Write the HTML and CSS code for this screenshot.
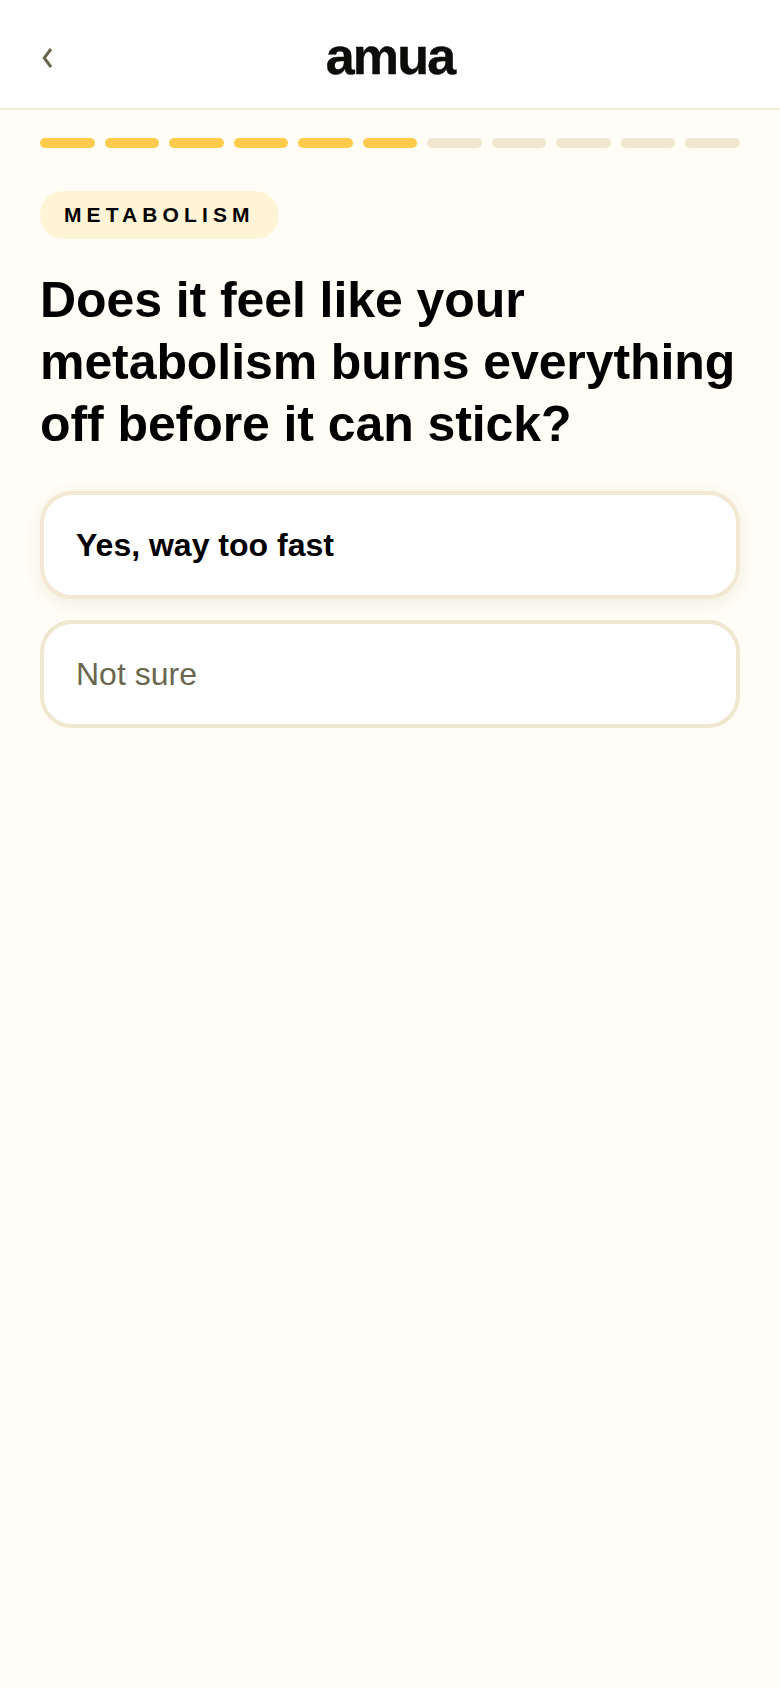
FILE: index.html
```html
<!DOCTYPE html>
<html lang="en">
<head>
    <meta charset="UTF-8">
    <meta name="viewport" content="width=device-width, initial-scale=1.0">
    <title>amua</title>
    <link rel="stylesheet" href="styles.css">
</head>
<body>
    <header class="topbar">
        <button class="back" aria-label="Back">
            <svg width="14" height="24" viewBox="0 0 14 24"><path d="M11 3 L4.2 12 L11 21" fill="none" stroke="#6b6650" stroke-width="3"/></svg>
        </button>
        <div class="logo">amua</div>
    </header>
    <main class="content">
        <div class="progress">
            <span class="seg on"></span>
            <span class="seg on"></span>
            <span class="seg on"></span>
            <span class="seg on"></span>
            <span class="seg on"></span>
            <span class="seg on"></span>
            <span class="seg"></span>
            <span class="seg"></span>
            <span class="seg"></span>
            <span class="seg"></span>
            <span class="seg"></span>
        </div>
        <span class="tag">METABOLISM</span>
        <h1>Does it feel like your metabolism burns everything off before it can stick?</h1>
        <div class="options">
            <button class="option selected">Yes, way too fast</button>
            <button class="option">Not sure</button>
        </div>
    </main>
</body>
</html>
```
FILE: styles.css
```css
body {
    margin: 0;
    min-height: 1688px;
    background-color: #fffdf5;
    color: #000;
    font-family: "Liberation Sans", Arial, sans-serif;
}

.topbar {
    position: relative;
    display: flex;
    align-items: center;
    justify-content: center;
    height: 108px;
    background-color: #fff;
    border-bottom: 2px solid #f0ebd6;
}

.back {
    position: absolute;
    left: 40px;
    top: 46px;
    padding: 0;
    border: none;
    background: none;
    line-height: 0;
}

.logo {
    padding-top: 4px;
    font-size: 52px;
    font-weight: bold;
    line-height: 60px;
    letter-spacing: -1.8px;
    color: #0c0c0a;
    -webkit-text-stroke: 0.4px #0c0c0a;
}

.content {
    padding: 28px 40px 0;
}

.progress {
    display: flex;
    gap: 10px;
    margin-bottom: 43px;
}

.seg {
    flex: 1;
    height: 10px;
    border-radius: 5px;
    background-color: #f1e7d0;
}

.seg.on {
    background-color: #ffcb4d;
}

.tag {
    display: inline-block;
    padding: 13px 24px;
    border-radius: 24px;
    background-color: #fff5d6;
    font-size: 21px;
    font-weight: bold;
    line-height: 22px;
    letter-spacing: 5.1px;
}

h1 {
    margin: 30px 0 36px;
    font-size: 50px;
    line-height: 62px;
    font-weight: bold;
    letter-spacing: -0.08px;
}

.options {
    display: flex;
    flex-direction: column;
    gap: 21px;
}

.option {
    height: 108px;
    padding: 0 32px;
    border: 4px solid #efe7cf;
    border-radius: 32px;
    background-color: #fff;
    color: #6b6650;
    font-family: inherit;
    font-size: 32px;
    text-align: left;
}

.option.selected {
    border-color: #f3e8d3;
    color: #000;
    font-weight: bold;
    box-shadow: 0 4px 16px rgba(120, 100, 40, 0.1);
}
```
